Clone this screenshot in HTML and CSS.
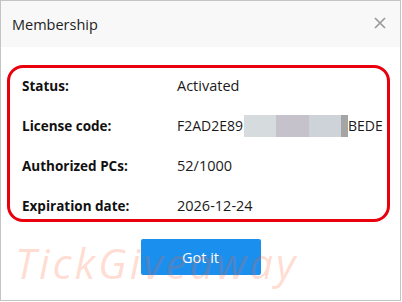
FILE: index.html
```html
<!DOCTYPE html>
<html>
<head>
<meta charset="utf-8">
<link rel="stylesheet" href="styles.css">
</head>
<body>
<div class="window">
  <div class="header">
    <span class="title">Membership</span>
    <svg class="close" width="12" height="12" viewBox="0 0 12 12"><path d="M1 1 L11 11 M11 1 L1 11" stroke="#9a9a9a" stroke-width="1.7" fill="none"/></svg>
  </div>
  <div class="content">
    <div class="box">
      <div class="label">Status:</div><div class="value">Activated</div>
      <div class="label">License code:</div>
      <div class="value code">F2AD2E89<span class="mask"><span class="m1"></span><span class="m2"></span><span class="m3"></span><span class="m4"></span></span>BEDE</div>
      <div class="label">Authorized PCs:</div><div class="value">52/1000</div>
      <div class="label">Expiration date:</div><div class="value">2026-12-24</div>
    </div>
    <button class="btn">Got it</button>
  </div>
  <div class="watermark">TickGiveaway</div>
</div>
</body>
</html>
```
FILE: styles.css
```css
html, body { margin: 0; padding: 0; background: #fff; }
body { font-family: "Open Sans", "Noto Sans", sans-serif; color: #1a1a1a; }
.window {
  position: relative;
  width: 399px;
  height: 299px;
  border: 1px solid #c4c4c4;
  overflow: hidden;
  background: #fff;
}
.header {
  height: 46px;
  background: #f8f8f8;
  display: flex;
  align-items: center;
  justify-content: space-between;
  padding: 0 14px 0 11px;
}
.title { font-size: 14.5px; color: #222; }
.close { display: block; margin-top: -2px; }
.content {
  display: flex;
  flex-direction: column;
  align-items: center;
  padding-top: 18px;
}
.box {
  align-self: flex-start;
  margin-left: 6px;
  width: 365px;
  box-sizing: content-box;
  border: 3px solid #e8000d;
  border-radius: 16px;
  display: grid;
  grid-template-columns: 155px 1fr;
  grid-auto-rows: 20px;
  row-gap: 20px;
  padding: 8px 0 0 12px;
  height: 143px;
  font-size: 13.5px;
  line-height: 20px;
}
.label { font-weight: 700; color: #111; }
.value { color: #1a1a1a; font-size: 14.5px; }
.code { display: flex; align-items: center; font-size: 14px; }
.mask { display: inline-flex; height: 22px; margin: 0 0 0 1px; }
.mask span { display: block; height: 22px; }
.m1 { width: 32px; background: #d6dbde; }
.m2 { width: 33px; background: #c5c2cc; }
.m3 { width: 32px; background: #cdd3d8; }
.m4 { width: 7px; background: #a5a5a5; }
.btn {
  margin-top: 17px;
  width: 120px;
  height: 36px;
  border: none;
  border-radius: 2px;
  background: #1b8fee;
  color: #fff;
  font-family: "Open Sans", sans-serif;
  font-size: 14.5px;
  padding: 0;
}
.watermark {
  position: absolute;
  left: 14px;
  top: 237px;
  font-family: "Open Sans", sans-serif;
  font-style: italic;
  font-weight: 400;
  font-size: 42px;
  line-height: 50px;
  letter-spacing: 3px;
  color: rgba(255, 100, 50, 0.22);
  pointer-events: none;
}
```
